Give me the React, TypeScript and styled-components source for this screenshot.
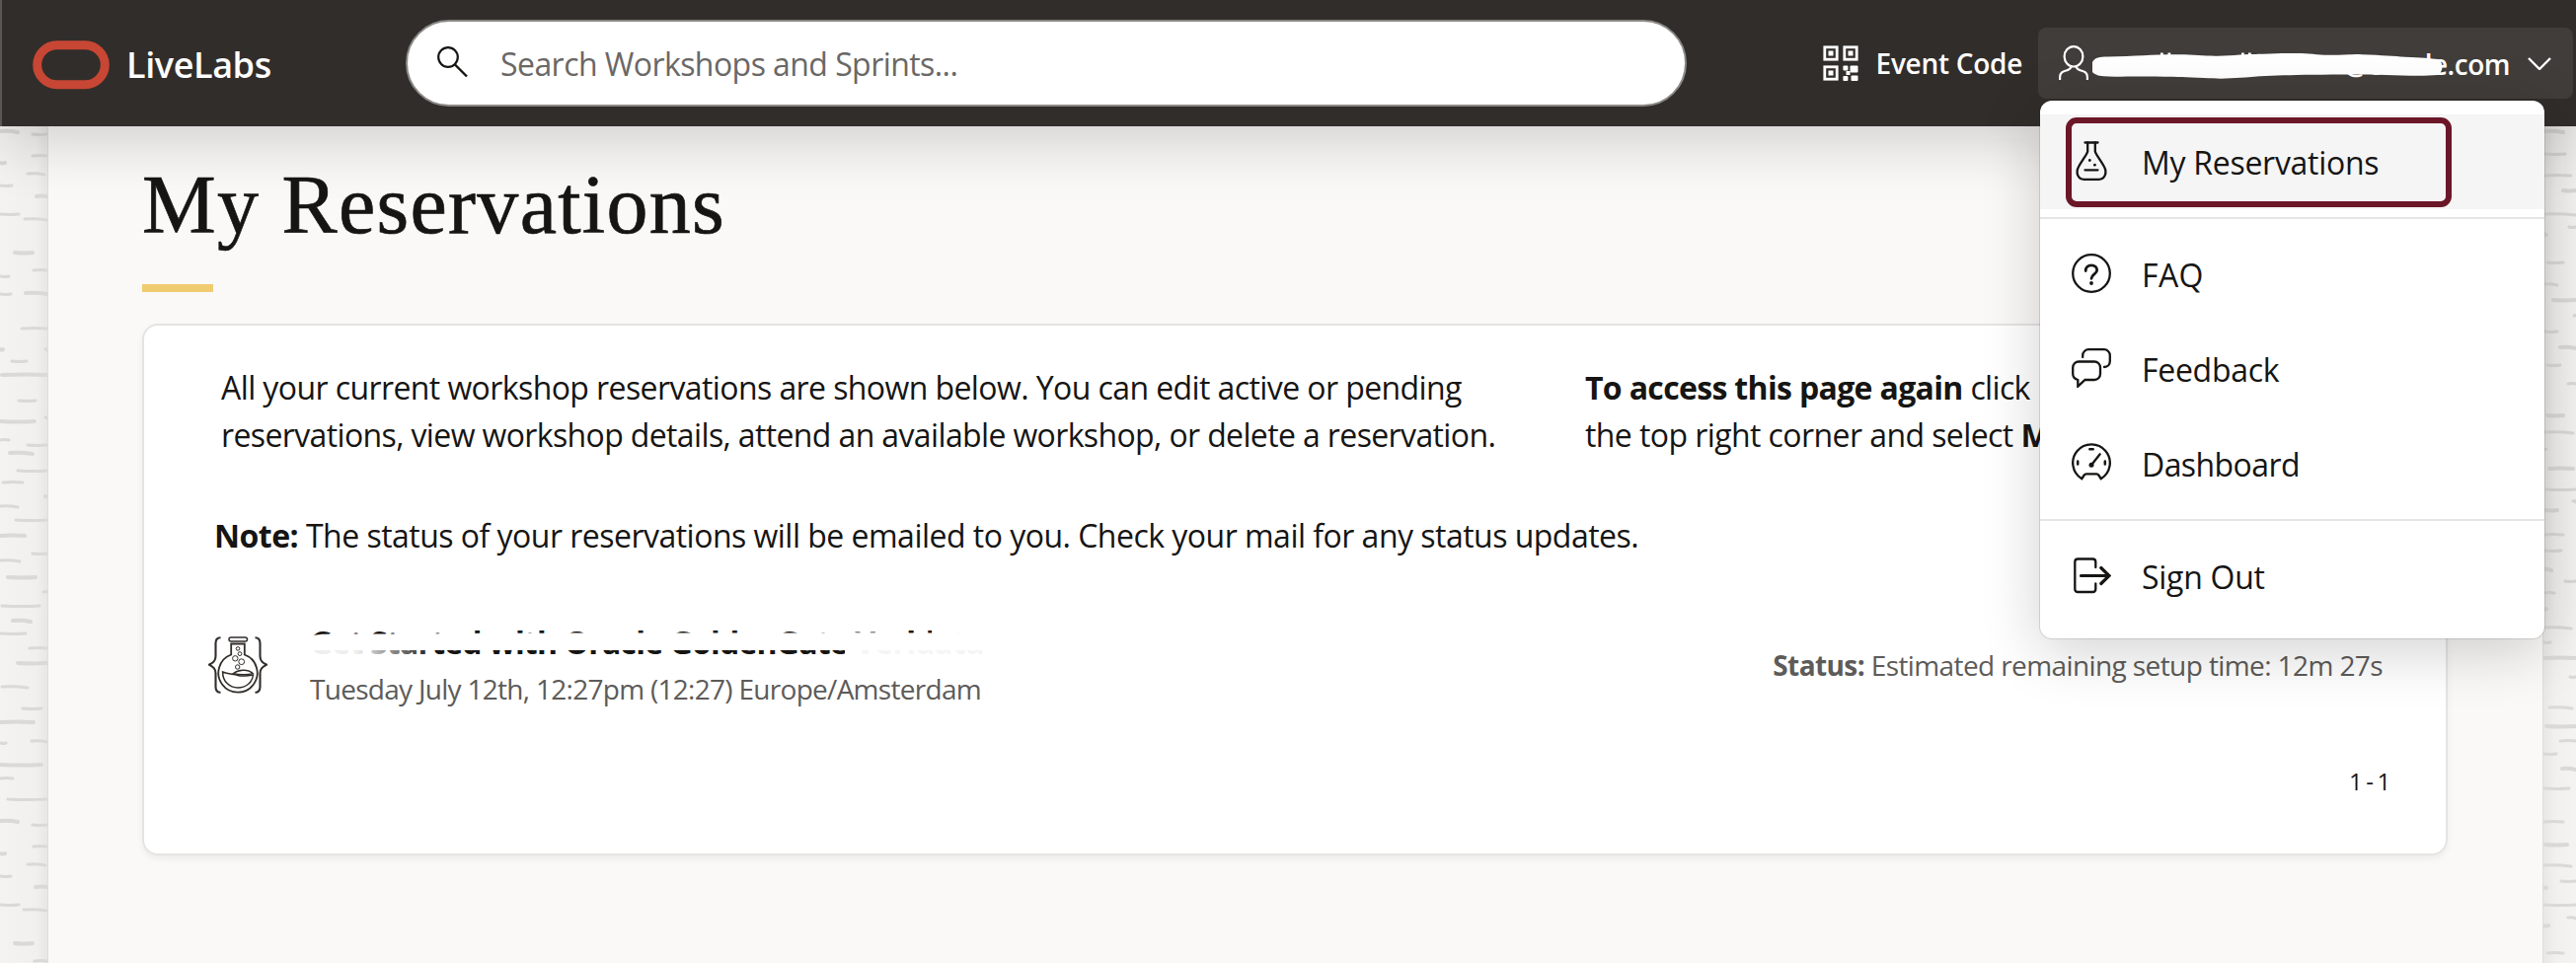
import React from "react";
import styled, { createGlobalStyle } from "styled-components";

const GlobalStyle = createGlobalStyle`
  *, *::before, *::after { box-sizing: border-box; }
  body {
    margin: 0;
    height: 976px;
    overflow: hidden;
    background: #f3f2f0;
    color: #161513;
    font-family: "Open Sans", "Noto Sans", sans-serif;
    font-size: 32px;
    line-height: 48px;
  }
  svg { display: block; flex: none; }
`;

const Page = styled.div`
  display: flex;
  flex-direction: column;
  width: 2610px;
  height: 976px;
  overflow: hidden;
`;

const Header = styled.header`
  position: relative;
  z-index: 2;
  flex: none;
  display: flex;
  align-items: center;
  height: 128px;
  padding: 0 3px 0 31px;
  border-left: 2px solid #5b5754;
  background: #312d2a;
  color: #fff;
  box-shadow: 0 12px 64px rgba(22, 21, 19, 0.2);
`;

const Brand = styled.a`
  display: flex;
  align-items: center;
  gap: 17px;
  width: 378px;
  padding-top: 3px;
  font-size: 36px;
  font-weight: 600;
  letter-spacing: -0.4px;
`;

const SearchBox = styled.div`
  display: flex;
  align-items: center;
  gap: 33px;
  width: 1298px;
  height: 88px;
  padding: 0 30px 2px;
  border: 2px solid #8b8985;
  border-radius: 44px;
  background: #fff;
  color: #161513;
`;

const Placeholder = styled.span`
  padding-top: 4px;
  color: #6a6866;
  letter-spacing: -0.56px;
`;

const EventCode = styled.a`
  display: flex;
  align-items: center;
  gap: 18px;
  margin-left: auto;
  margin-right: 16px;
  font-size: 28px;
  font-weight: 600;
  letter-spacing: -0.28px;
`;

const UserButton = styled.div`
  position: relative;
  display: flex;
  align-items: center;
  width: 542px;
  height: 72px;
  padding: 0 22px 0 21px;
  border-radius: 8px;
  background: #413d3a;
  font-size: 28px;
  font-weight: 600;
`;

const UserName = styled.span`
  flex: 1;
  margin-right: 18px;
  padding-top: 1px;
  text-align: right;
  letter-spacing: -0.5px;
`;

const BrushStroke = styled.svg`
  position: absolute;
  left: 50px;
  top: 20px;
  filter: blur(0.7px);
`;

const Body = styled.div`
  flex: 1;
  display: flex;
`;

const Gutter = styled.aside<{ $width: number; $side: "left" | "right" }>`
  flex: none;
  width: ${(p) => p.$width}px;
  overflow: hidden;
  background: linear-gradient(
    to ${(p) => p.$side},
    #e9e7e5 0,
    #f1f0ee 12px,
    #f4f3f1 100%
  );
`;

const Main = styled.main`
  flex: 1;
  padding: 32px 96px 0 95px;
  border: solid #e0dedc;
  border-width: 0 1px;
  background: #fbf9f8;
`;

const Title = styled.h1`
  margin: 0;
  font: 400 84px/96px "Liberation Serif", serif;
  letter-spacing: 1.3px;
  -webkit-text-stroke: 0.7px currentColor;
`;

const Accent = styled.div`
  width: 72px;
  height: 8px;
  margin: 32px 0;
  background: #f0cc71;
`;

const Card = styled.section`
  height: 539px;
  border: 2px solid #e6e4e3;
  border-radius: 16px;
  background: #fff;
  box-shadow: 0 4px 8px -2px rgba(22, 21, 19, 0.08);
`;

const Intro = styled.div`
  display: grid;
  grid-template-columns: 1382px 1fr;
  padding: 39px 0 54px 78px;
  white-space: nowrap;
`;

const Line = styled.div<{ $spacing: number }>`
  letter-spacing: ${(p) => p.$spacing}px;
`;

const Note = styled.p`
  margin: 0 0 60px;
  padding-left: 71px;
  letter-spacing: -0.52px;
`;

const Reservation = styled.div`
  display: flex;
  padding: 0 64px 0 65px;
`;

const LabSlot = styled.div`
  padding-top: 18px;
`;

const Details = styled.div`
  position: relative;
  flex: 1;
  margin-left: 43px;
`;

const Workshop = styled.div`
  height: 48px;
  margin-bottom: 3px;
  clip-path: inset(12px 0 12px 0);
  font-weight: 700;
  letter-spacing: -0.81px;
`;

const Eraser = styled.svg`
  position: absolute;
  left: -4px;
  top: 10px;
`;

const When = styled.div`
  color: #5d5b59;
  font-size: 28px;
  line-height: 40px;
  letter-spacing: -0.71px;
`;

const Status = styled.div`
  padding-top: 27px;
  color: #5d5b59;
  font-size: 28px;
  line-height: 40px;
  letter-spacing: -0.6px;
`;

const Pager = styled.div`
  padding: 58px 56px 0 0;
  text-align: right;
  font-size: 24px;
  line-height: 32px;
  letter-spacing: -0.35px;
  word-spacing: -2px;
`;

const Menu = styled.nav`
  position: absolute;
  z-index: 3;
  top: 102px;
  right: 32px;
  width: 511px;
  height: 545px;
  padding: 14px 0;
  border-radius: 12px;
  background: #fff;
  color: #161513;
  box-shadow: 0 0 0 1px rgba(22, 21, 19, 0.13), 0 12px 60px rgba(22, 21, 19, 0.2);
`;

const MenuItem = styled.a<{ $active?: boolean; $spacing?: number }>`
  position: relative;
  display: flex;
  align-items: center;
  gap: 31px;
  height: 96px;
  padding: 2px 0 0 32px;
  background: ${(p) => (p.$active ? "#f5f5f5" : "transparent")};
  letter-spacing: ${(p) => p.$spacing ?? -0.28}px;

  svg { margin-top: -4px; }
`;

const Divider = styled.hr`
  height: 2px;
  margin: 8px 0;
  border: 0;
  background: #e5e5e5;
`;

const Highlight = styled.div`
  position: absolute;
  left: 26px;
  top: 3px;
  width: 391px;
  height: 91px;
  border: 6px solid #6b1727;
  border-radius: 11px;
`;

type Dash = [number, number, number];

const LEFT_DASHES: Dash[] = [
  [0, 18, 133], [33, 48, 136], [33, 48, 158], [0, 5, 165], [28, 45, 176], [0, 12, 188], [37, 48, 199],
  [0, 19, 217], [25, 48, 222], [15, 33, 256], [34, 48, 274], [0, 9, 280], [26, 48, 297], [0, 11, 298],
  [22, 48, 333], [0, 3, 354], [46, 48, 354], [12, 27, 366], [2, 48, 380], [19, 36, 406], [46, 48, 423],
  [0, 35, 427], [0, 9, 446], [28, 48, 451], [10, 33, 459], [18, 48, 477], [3, 23, 489], [46, 48, 503],
  [0, 18, 513], [16, 48, 527], [0, 25, 543], [33, 48, 561], [0, 20, 568], [8, 36, 585], [44, 48, 600],
  [2, 40, 614], [13, 31, 629], [0, 26, 642], [30, 48, 657], [18, 48, 672], [2, 28, 696], [23, 42, 718],
  [0, 34, 732], [0, 6, 753], [32, 48, 751], [0, 42, 775], [0, 13, 789], [8, 48, 810], [0, 18, 832],
  [33, 48, 836], [34, 48, 858], [0, 5, 865], [28, 46, 876], [0, 11, 888], [36, 48, 899], [0, 19, 917],
  [24, 48, 922], [15, 33, 956], [35, 48, 974],
];

const RIGHT_DASHES: Dash[] = [
  [0, 20, 133], [0, 22, 156], [0, 28, 178], [20, 33, 193], [0, 33, 217], [26, 33, 230], [0, 3, 238],
  [4, 20, 266], [0, 14, 288], [10, 33, 304], [31, 33, 320], [0, 14, 336], [17, 33, 352], [4, 17, 370],
  [25, 33, 389], [4, 20, 421], [1, 30, 438], [0, 3, 455], [6, 30, 475], [3, 33, 496], [30, 33, 508],
  [0, 14, 517], [0, 20, 542], [0, 18, 558], [0, 8, 577], [22, 33, 589], [0, 11, 601], [0, 3, 617],
  [0, 28, 636], [0, 7, 651], [0, 33, 667], [27, 33, 686], [6, 29, 717], [3, 33, 736], [17, 33, 751],
  [0, 13, 764], [19, 33, 779], [0, 26, 799], [0, 20, 833], [2, 24, 856], [0, 28, 877], [18, 33, 893],
  [0, 3, 900], [0, 33, 917], [25, 33, 930], [0, 5, 938], [4, 20, 966],
];

const Texture = ({ width, dashes }: { width: number; dashes: Dash[] }) => (
  <svg width={width} height={848} viewBox={`0 128 ${width} 848`} fill="none" stroke="#dad9d7" strokeLinecap="round">
    {dashes.map(([x1, x2, y], i) => (
      <path key={i} strokeWidth={i % 3 ? 3 : 4} d={`M${x1} ${y}Q${(x1 + x2) / 2} ${y + (i % 2 ? 1 : -1)} ${x2} ${y + (i % 4 === 0 ? 1 : 0)}`} />
    ))}
  </svg>
);

const Logo = () => (
  <svg width="78" height="50" viewBox="0 0 78 50" fill="none">
    <rect x="4.7" y="4.7" width="68.6" height="40" rx="20" stroke="#c74634" strokeWidth="9" />
  </svg>
);

const SearchIcon = () => (
  <svg width="31" height="32" viewBox="0 0 31 32" fill="none" stroke="currentColor" strokeWidth="2.2">
    <circle cx="11" cy="11" r="9.8" />
    <path d="M18 18.5L30 30.5" strokeWidth="2.4" />
  </svg>
);

const QrIcon = () => (
  <svg width="36" height="36" viewBox="0 0 36 36" fill="none" stroke="currentColor" strokeWidth="2.8">
    <rect x="1.8" y="1.8" width="12.4" height="12.4" />
    <rect x="21.8" y="1.8" width="12.4" height="12.4" />
    <rect x="1.8" y="21.8" width="12.4" height="12.4" />
    <g fill="currentColor" stroke="none">
      <path d="M5.5 5.5h5v5h-5zM25.5 5.5h5v5h-5zM5.5 25.5h5v5h-5z" />
      <rect x="20.4" y="20.4" width="5" height="5" rx="1" />
      <rect x="27.5" y="20.4" width="8" height="7" rx="1" />
      <rect x="23.5" y="26" width="4" height="4" />
      <rect x="20.4" y="31" width="5" height="5" rx="1" />
      <rect x="28.5" y="30.5" width="7" height="5.5" rx="1" />
    </g>
  </svg>
);

const UserIcon = () => (
  <svg width="30" height="36" viewBox="0 0 30 36" fill="none" stroke="currentColor" strokeWidth="2.2">
    <ellipse cx="15" cy="11.3" rx="9.4" ry="10.2" />
    <path d="M1.1 35V32C1.1 26 6 26.500 9.500 24.700C11.800 23.500 12.500 22.800 12.500 21.300" />
    <path d="M28.900 35V32C28.900 26 24 26.500 20.500 24.700C18.200 23.500 17.500 22.800 17.500 21.300" />
  </svg>
);

const Chevron = () => (
  <svg width="24" height="14" viewBox="0 0 24 14" fill="none" stroke="currentColor" strokeWidth="2.4">
    <path d="M1 2L12 13L23 2" />
  </svg>
);

const MenuIcon = ({ children }: { children: React.ReactNode }) => (
  <svg width="40" height="40" viewBox="0 0 40 40" fill="none" stroke="currentColor" strokeWidth="2.3" strokeLinecap="round">
    {children}
  </svg>
);

const FlaskIcon = () => (
  <MenuIcon>
    <path d="M13.500 1.500H26.500M13.500 29.300H26.500" />
    <path d="M16.200 1.500V10.500C15.500 13.500 11 19 7.300 25.500C3.500 32 6.500 38.800 12.500 38.800H27.500C33.500 38.800 36.500 32 32.700 25.500C29 19 24.500 13.500 23.800 10.500V1.500" />
    <circle cx="18.300" cy="19.500" r="1.400" fill="currentColor" stroke="none" />
    <circle cx="23.400" cy="24.200" r="1.400" fill="currentColor" stroke="none" />
  </MenuIcon>
);

const HelpIcon = () => (
  <MenuIcon>
    <circle cx="20" cy="20" r="18.800" />
    <path strokeWidth="2.800" d="M14.200 17.500C14.200 13.700 16.700 11.800 19.900 11.800C23.500 11.800 25.700 14 25.700 16.800C25.700 20.800 20 21 20 25.300" />
    <circle cx="20" cy="30" r="1.900" fill="currentColor" stroke="none" />
  </MenuIcon>
);

const ChatIcon = () => (
  <MenuIcon>
    <path d="M11.200 9V7.200A6 6 0 0 1 17.200 1.200H32.800A6 6 0 0 1 38.800 7.200V13C38.800 16.500 36.500 19 33 19" />
    <path d="M7.200 13.500H23A6 6 0 0 1 29 19.500V26A6 6 0 0 1 23 32H13.500L6.300 38.700V32C3 31 1.200 29 1.200 26V19.500A6 6 0 0 1 7.200 13.500Z" />
  </MenuIcon>
);

const GaugeIcon = () => (
  <MenuIcon>
    <path d="M10.300 36.200A18.800 18.800 0 1 1 29.700 36.200L27.300 32.500Q26.500 31.300 25.300 31.300H14.700Q13.500 31.300 12.700 32.500Z" />
    <path strokeWidth="2.500" d="M18.300 6.300H21.700M6.200 18.500V21.500M33.800 18.500V21.500" />
    <path d="M20 22.300L28.700 11.300" />
    <circle cx="20" cy="22.300" r="2.500" fill="currentColor" stroke="none" />
  </MenuIcon>
);

const SignOutIcon = () => (
  <MenuIcon>
    <path d="M24.300 12V6.500Q24.300 3.500 21.300 3.500H6.300Q3.300 3.500 3.300 6.500V34Q3.300 37 6.300 37H21.300Q24.300 37 24.300 34V28.500" />
    <path strokeWidth="3.200" d="M9.500 20.500H38M29.800 12.500L38 20.500L29.800 28.500" />
  </MenuIcon>
);

const LabIcon = () => (
  <svg width="60" height="58" viewBox="0 0 60 58" fill="none" stroke="#312d2a" strokeWidth="1.500">
    <g strokeWidth="2.100">
      <path d="M12.500 1.200C8.500 1.200 7.500 3.500 7.500 7V20C7.500 25 5 26.500 .8 28.700C5 31 7.500 32.500 7.500 37.500V51C7.500 54.500 8.500 56.800 12.500 56.800" />
      <path d="M47.500 1.200C51.500 1.200 52.500 3.500 52.500 7V20C52.500 25 55 26.500 59.200 28.700C55 31 52.500 32.500 52.500 37.500V51C52.500 54.500 51.500 56.800 47.500 56.800" />
    </g>
    <rect x="21" y=".9" width="18.500" height="4.200" rx="2" />
    <path strokeWidth="1.800" d="M23.200 7.500H36.800V18.500A19.700 19.700 0 1 1 23.200 18.500Z" />
    <path d="M14.600 36C20 38.500 25 38 30 39.500C35 41 41 39.500 45.500 39C44.500 47 38 52 30 52C21.500 52 14.500 45.500 14.600 36Z" />
    <path d="M25.500 37.500C30 34 40 32.500 45 37.500C40 39.500 31 39 25.500 37.500Z" />
    <g strokeWidth="1">
      <circle cx="30" cy="12.400" r="1.800" />
      <circle cx="32" cy="17.600" r="1.900" />
      <circle cx="27.300" cy="22.300" r="2.700" />
      <circle cx="33.700" cy="25.700" r="2.900" />
      <circle cx="29.700" cy="31" r="2.200" />
    </g>
  </svg>
);

export default function App() {
  return (
    <>
      <GlobalStyle />
      <Page>
        <Header>
          <Brand>
            <Logo />
            LiveLabs
          </Brand>
          <SearchBox>
            <SearchIcon />
            <Placeholder>Search Workshops and Sprints...</Placeholder>
          </SearchBox>
          <EventCode>
            <QrIcon />
            Event Code
          </EventCode>
          <UserButton>
            <UserIcon />
            <UserName>@oracle.com</UserName>
            <Chevron />
            <BrushStroke width="370" height="36" viewBox="0 0 370 36" fill="#fff">
              <path d="M5 15C8 10 12 9.700 20 9.500C50 9 70 7 92 7.300C110 7.500 118 8.900 132 8.700C150 8 160 7 178 6.700C190 6 200 5.800 212 6C225 6 232 7.700 245 7.700C258 7.800 265 7 278 7.300C300 8 310 9 322 9.700C338 10.500 348 11 355 12C361 15 361 24 355 28C340 29.500 320 28.500 302 28C280 27 250 27.500 228 27.700C205 28 190 28.500 175 29.300C165 30.300 155 31 145 31.300C135 32 128 31.500 118 31C100 30 90 30 78 29.700C50 29 25 30.500 12 28.700C7 27.500 5 25 5 25Z" />
              <path d="M74 5.500h2.800v6h-2.800zM81.500 5.500h2.800v6h-2.800zM156 5.500h2.800v6h-2.800zM163 5.500h2.800v6h-2.800z" />
            </BrushStroke>
          </UserButton>
          <Menu>
            <MenuItem $active>
              <FlaskIcon />
              My Reservations
              <Highlight />
            </MenuItem>
            <Divider />
            <MenuItem $spacing={0.4}><HelpIcon />FAQ</MenuItem>
            <MenuItem><ChatIcon />Feedback</MenuItem>
            <MenuItem $spacing={-0.57}><GaugeIcon />Dashboard</MenuItem>
            <Divider />
            <MenuItem><SignOutIcon />Sign Out</MenuItem>
          </Menu>
        </Header>
        <Body>
          <Gutter $width={48} $side="left">
            <Texture width={48} dashes={LEFT_DASHES} />
          </Gutter>
          <Main>
            <Title>My Reservations</Title>
            <Accent />
            <Card>
              <Intro>
                <div>
                  <Line $spacing={-0.59}>All your current workshop reservations are shown below. You can edit active or pending</Line>
                  <Line $spacing={-0.63}>reservations, view workshop details, attend an available workshop, or delete a reservation.</Line>
                </div>
                <div>
                  <Line $spacing={-0.66}><b>To access this page again</b> click</Line>
                  <Line $spacing={-0.58}>the top right corner and select <b>My</b></Line>
                </div>
              </Intro>
              <Note><b>Note:</b> The status of your reservations will be emailed to you. Check your mail for any status updates.</Note>
              <Reservation>
                <LabSlot><LabIcon /></LabSlot>
                <Details>
                  <Workshop>Get Started with Oracle GoldenGate Veridata</Workshop>
                  <Eraser width="700" height="34" viewBox="0 0 700 34">
                    <defs>
                      <linearGradient id="head" x1="0" x2="1" y1="0" y2="0">
                        <stop offset="0" stopColor="#fff" stopOpacity="0.93" />
                        <stop offset="0.4" stopColor="#fff" stopOpacity="0.93" />
                        <stop offset="1" stopColor="#fff" stopOpacity="0" />
                      </linearGradient>
                    </defs>
                    <path fill="#fff" d="M4 9C8 6 15 5.500 30 5.500L120 5.500C150 4.500 300 4.500 700 4.500V22H4Z" />
                    <rect x="0" y="18" width="130" height="12" fill="url(#head)" />
                    <rect x="546" y="18" width="150" height="12" fill="#fff" fillOpacity="0.96" />
                    <rect x="546" y="0" width="50" height="8" fill="#fff" fillOpacity="0.5" />
                    <rect x="634" y="0" width="60" height="8" fill="#fff" fillOpacity="0.9" />
                  </Eraser>
                  <When>Tuesday July 12th, 12:27pm (12:27) Europe/Amsterdam</When>
                </Details>
                <Status><b>Status:</b> Estimated remaining setup time: 12m 27s</Status>
              </Reservation>
              <Pager>1 - 1</Pager>
            </Card>
          </Main>
          <Gutter $width={33} $side="right">
            <Texture width={33} dashes={RIGHT_DASHES} />
          </Gutter>
        </Body>
      </Page>
    </>
  );
}
